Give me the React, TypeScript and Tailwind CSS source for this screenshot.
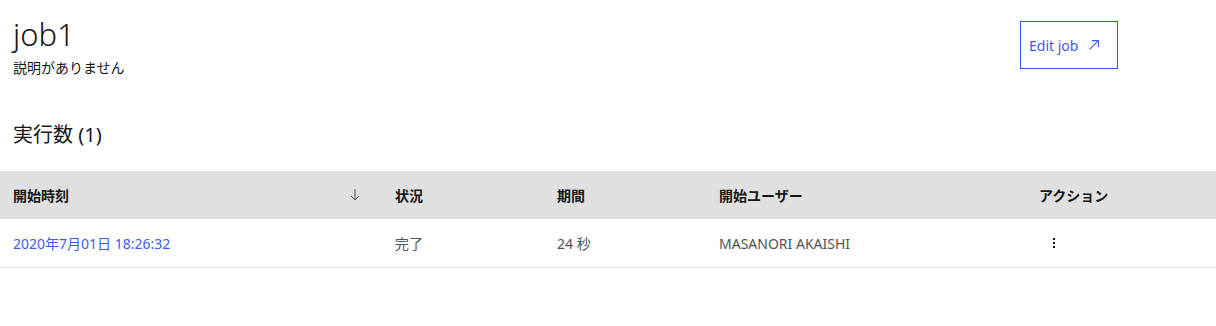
import React from "react";

const font = { fontFamily: '"Noto Sans", "Noto Sans CJK JP", sans-serif' };

export default function App() {
  return (
    <div className="w-[1216px] h-[326px] bg-white text-[#161616] overflow-hidden" style={font}>
      <div className="flex justify-between pl-[13px] pr-[98px] pt-[14px]">
        <div>
          <h1 className="text-[31px] leading-[40px] font-light tracking-[0px]">job1</h1>
          <p className="mt-[5px] text-[14px] leading-[18px] text-[#161616]">説明がありません</p>
        </div>
        <button className="mt-[7px] w-[98px] h-[48px] border border-[#3553f5] flex items-center pl-[8px] pr-[16px] justify-between text-[14px] text-[#4258f2]">
          <span>Edit job</span>
          <svg width="14" height="14" viewBox="0 0 16 16" fill="none" stroke="#3d55f4" strokeWidth="1.2">
            <path d="M3 13 L13 3" />
            <path d="M5.5 3 H13 V10.5" />
          </svg>
        </button>
      </div>
      <h2 className="pl-[13px] mt-[44px] text-[20px] leading-[28px]">実行数 (1)</h2>
      <div className="mt-[22px]">
        <div className="grid grid-cols-[379px_162px_162px_320px_1fr] h-[48px] bg-[#e0e0e0] items-center text-[14px] font-semibold text-[#161616]">
          <div className="pl-[13px] pr-[18px] flex items-center justify-between">
            <span>開始時刻</span>
            <svg width="12" height="14" viewBox="0 0 12 14" fill="none" stroke="#525252" strokeWidth="1">
              <path d="M6 1 V12" />
              <path d="M2 8 L6 12 L10 8" />
            </svg>
          </div>
          <div className="pl-[16px]">状況</div>
          <div className="pl-[16px]">期間</div>
          <div className="pl-[16px]">開始ユーザー</div>
          <div className="pl-[16px]">アクション</div>
        </div>
        <div className="grid grid-cols-[379px_162px_162px_320px_1fr] h-[49px] border-b border-[#e0e0e0] items-center text-[14px] text-[#525252]">
          <div className="pl-[13px] text-[#3d5af6]">2020年7月01日 18:26:32</div>
          <div className="pl-[16px]">完了</div>
          <div className="pl-[16px]">24 秒</div>
          <div className="pl-[16px]">MASANORI AKAISHI</div>
          <div className="pl-[29px] flex">
            <svg width="4" height="14" viewBox="0 0 4 14" fill="#161616">
              <rect x="1" y="2" width="2" height="2" />
              <rect x="1" y="6" width="2" height="2" />
              <rect x="1" y="10" width="2" height="2" />
            </svg>
          </div>
        </div>
      </div>
    </div>
  );
}
